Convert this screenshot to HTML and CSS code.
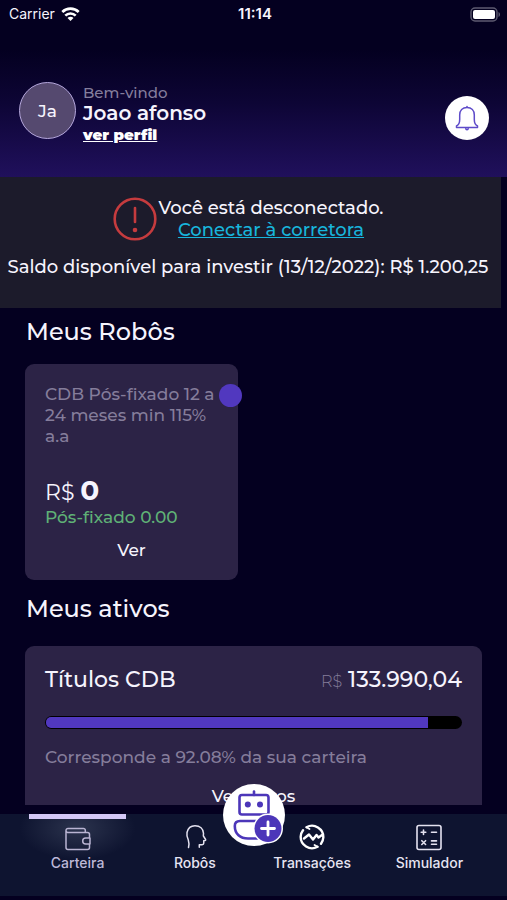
FILE: index.html
```html
<!DOCTYPE html>
<html lang="pt-BR">
<head>
<meta charset="utf-8">
<meta name="viewport" content="width=device-width, initial-scale=1">
<title>Carteira</title>
<link rel="stylesheet" href="styles.css">
</head>
<body>
<div class="app">
  <header class="hero">
    <div class="status">
      <span class="carrier">Carrier
        <svg width="19" height="14" viewBox="0 0 19 14" fill="none" stroke="#fff" stroke-width="2.6" aria-hidden="true"><path d="M1.300 5a11.600 11.600 0 0 1 16.400 0M4.300 8.600a7.400 7.400 0 0 1 10.400 0"/><path d="M9.500 14 6.500 11a4.200 4.200 0 0 1 6 0z" fill="#fff" stroke="none"/></svg>
      </span>
      <span class="clock">11:14</span>
      <svg class="battery" width="31" height="15" viewBox="0 0 31 15" aria-hidden="true"><rect x="1" y="1" width="26" height="13" rx="4" fill="none" stroke="#5d5a70" stroke-width="1.400"/><rect x="3" y="3" width="22" height="9" rx="2" fill="#fff"/><path d="M28.500 5v5c2-.8 2-4.200 0-5z" fill="#5d5a70"/></svg>
    </div>
    <div class="profile">
      <div class="avatar">Ja</div>
      <div class="who">
        <span class="welcome">Bem-vindo</span>
        <span class="name">Joao afonso</span>
        <a class="see" href="#perfil">ver perfil</a>
      </div>
      <button class="bell" type="button" aria-label="Notificações">
        <svg width="26" height="28" viewBox="0 0 26 28" fill="none" stroke="#5e4bc9" stroke-width="1.500" stroke-linecap="round" stroke-linejoin="round" aria-hidden="true"><path d="M13 3.500C8.500 3.500 5.700 6.500 5.700 11v4.500C5.700 19 4.500 21 2.500 22v1.500h21V22c-2-1-3.200-3-3.200-6.500V11c0-4.500-2.800-7.500-7.300-7.500z"/><path d="M13 3.300V2.500M11.800 24.500c0 1.600 2.400 1.600 2.400 0"/></svg>
      </button>
    </div>
  </header>

  <main class="content">
    <section class="notice">
      <div class="notice-top">
        <svg width="44" height="44" viewBox="0 0 44 44" fill="none" stroke="#c53b3e" stroke-width="2.600" stroke-linecap="round" aria-hidden="true"><circle cx="22" cy="22" r="20.300"/><path d="M22 11v14"/><circle cx="22" cy="33" r="2.300" fill="#c53b3e" stroke="none"/></svg>
        <p class="notice-text">Você está desconectado.<br><a href="#conectar">Conectar à corretora</a></p>
      </div>
      <p class="balance">Saldo disponível para investir (13/12/2022): R$ 1.200,25</p>
    </section>

    <h2>Meus Robôs</h2>
    <article class="card robot">
      <span class="dot"></span>
      <p class="robot-name">CDB Pós-fixado 12 a 24 meses min 115% a.a</p>
      <p class="amount">R$ <strong>0</strong></p>
      <p class="yield">Pós-fixado 0.00</p>
      <button class="link" type="button">Ver</button>
    </article>

    <h2>Meus ativos</h2>
    <article class="card asset">
      <div class="asset-head">
        <h3>Títulos CDB</h3>
        <p class="total"><span>R$</span> 133.990,04</p>
      </div>
      <div class="bar"><div class="fill" style="width:92.08%"></div></div>
      <p class="share">Corresponde a 92.08% da sua carteira</p>
      <button class="link" type="button">Ver ativos</button>
    </article>
  </main>

  <nav class="tabs">
    <a class="tab active" href="#carteira">
      <svg width="28" height="28" viewBox="0 0 28 28" fill="none" stroke="#b9b4d2" stroke-width="1.500" stroke-linejoin="round" aria-hidden="true"><path d="M25.500 13V9.500a2 2 0 0 0-2-2H3.500A2 2 0 0 1 2 5.500V22.500a2 2 0 0 0 2 2h19.500a2 2 0 0 0 2-2V19M2 5.500a2 2 0 0 1 2-2h15.500a1.800 1.800 0 0 1 1.800 1.800v2.200M26 13h-4.300a3 3 0 0 0 0 6H26z"/></svg>
      Carteira
    </a>
    <a class="tab" href="#robos">
      <svg width="28" height="28" viewBox="0 0 28 28" fill="none" stroke="#e4e2f0" stroke-width="1.500" stroke-linecap="round" stroke-linejoin="round" aria-hidden="true"><path d="M7.500 24.500c.8-3 .6-5-.2-7.500C6 14 5.500 12 6 9.500 7 5 10 2.800 14 2.800c5 0 8.200 3 8.500 7.500 0 1.300-.3 2-.1 2.700l2.200 3.500c.2.500 0 .9-.6 1l-1.300.3.100 2.200c0 1.200-.6 1.700-1.700 1.700h-2.800v2.500"/></svg>
      Robôs
    </a>
    <a class="tab" href="#transacoes">
      <svg width="28" height="28" viewBox="0 0 28 28" fill="none" stroke="#fff" stroke-width="2.400" stroke-linecap="round" stroke-linejoin="round" aria-hidden="true"><path d="M8.500 4.200A11.300 11.300 0 0 1 25.300 14.500M19.500 23.800A11.300 11.300 0 0 1 2.700 13.500M2.700 13.500A11.300 11.300 0 0 1 5 7.200M25.300 14.500A11.300 11.300 0 0 1 23 20.800"/><path d="M8.500 4.200l3 1.800M19.500 23.800l-3-1.800" stroke-width="1.800"/><path d="M6 15.500l5-4 4 5 3.500-4.500 2 2.500 3.500-2.500"/></svg>
      Transações
    </a>
    <a class="tab" href="#simulador">
      <svg width="28" height="28" viewBox="0 0 28 28" fill="none" stroke="#e4e2f0" stroke-width="1.600" stroke-linecap="round" aria-hidden="true"><rect x="2" y="2.500" width="24" height="24" rx="2"/><path d="M8.500 7v4.500M6.200 9.300h4.600M16.500 9.300h5M6.800 17.700l3.800 3.800M10.600 17.700 6.800 21.500M16.500 17.900h5M16.500 21.300h5"/></svg>
      Simulador
    </a>
    <button class="fab" type="button" aria-label="Novo robô">
      <svg width="62" height="62" viewBox="0 0 62 62" fill="none" stroke="#4c36b9" stroke-width="2.600" stroke-linecap="round" stroke-linejoin="round" aria-hidden="true"><rect x="16.500" y="11" width="29" height="19.500" rx="2.500"/><path d="M31 11V7.500"/><g fill="#4c36b9" stroke="none"><circle cx="24.800" cy="20.500" r="3"/><circle cx="37" cy="20.500" r="3"/></g><path d="M38 37H17c-3.500 0-5.200 2-5.200 5 0 8 5.500 12.500 13.200 12.500h9"/><circle cx="45" cy="44.500" r="15" fill="#fff" stroke="none"/><circle cx="45" cy="44.500" r="13.500" fill="#4c36b9" stroke="none"/><path d="M45 38v13M38.500 44.500h13" stroke="#fff" stroke-width="2.800"/></svg>
    </button>
  </nav>
</div>
</body>
</html>
```
FILE: styles.css
```css
* { box-sizing: border-box; }
body {
  margin: 0;
  background: #040020;
  color: #f6f4fd;
  font-family: Montserrat, Inter, sans-serif;
  font-weight: 500;
}
p, h2, h3 { margin: 0; font-weight: 500; }
svg { display: block; flex: none; }
button { font: inherit; color: inherit; border: 0; padding: 0; background: none; cursor: pointer; }

.app { height: 100vh; display: flex; flex-direction: column; padding-bottom: 4px; }

.hero { flex: none; height: 177px; background: linear-gradient(#040020 28%, #0d0535 58%, #20105c); }
.status {
  display: grid;
  grid-template-columns: 1fr auto 1fr;
  align-items: center;
  height: 28px;
  padding: 0 6px 0 9px;
  font: 400 14px/28px Inter, sans-serif;
}
.carrier { display: flex; align-items: center; gap: 6px; }
.clock { font-size: 15px; font-weight: 600; }
.battery { justify-self: end; }

.profile { display: flex; align-items: flex-start; padding: 54px 18px 0 19px; }
.avatar {
  width: 57px;
  height: 57px;
  display: grid;
  place-items: center;
  border: 1px solid #b5a7dc;
  border-radius: 50%;
  background: #55496f;
  font-size: 17px;
}
.who { display: flex; flex-direction: column; flex: 1; margin-left: 7px; line-height: 21px; }
.welcome { font-size: 15px; color: #857e9d; }
.name { font-size: 20px; font-weight: 600; }
.see { font-size: 15px; font-weight: 900; color: #fff; }
.bell {
  width: 44px;
  height: 44px;
  margin-top: 14px;
  display: grid;
  place-items: center;
  border-radius: 50%;
  background: #fff;
}

.content { flex: 1; min-height: 0; overflow: hidden; margin-bottom: 9px; }
.notice {
  margin-right: 6px;
  padding: 20px 5px 30px 0;
  background: #1c1b2b;
  font-size: 18px;
  line-height: 22px;
  text-align: center;
}
.notice-top { display: flex; justify-content: center; gap: 2px; margin-bottom: 15px; }
.notice-text a { color: #18b5dc; }
.balance { white-space: nowrap; }

h2 { margin: 0 26px; padding-top: 8px; font-size: 24px; line-height: 32px; }
.card { position: relative; margin: 16px 25px 0; padding: 20px; border-radius: 9px; background: #2c2346; }
.robot { width: 213px; height: 216px; margin-bottom: 5px; }
.dot { position: absolute; top: 20px; right: -4px; width: 23px; height: 23px; border-radius: 50%; background: #5138bf; }
.robot-name, .yield, .share { font-size: 17px; line-height: 21px; }
.robot-name, .share { color: #857d9b; }
.robot-name { margin-right: -4px; }
.amount { margin-top: 29px; font-size: 22px; line-height: 29px; font-weight: 400; }
.amount strong { font-size: 28px; font-weight: 700; }
.yield { color: #5fb176; }
.link { display: block; width: 100%; margin-top: 11px; font-size: 17px; line-height: 22px; }

.asset { margin-top: 21px; }
.asset-head { display: flex; justify-content: space-between; align-items: baseline; line-height: 28px; }
h3, .total { font-size: 22px; }
.total span { font-size: 16px; font-weight: 300; color: #857d9b; }
.bar { height: 13px; margin-top: 20px; padding: 1px; border-radius: 7px; background: #000; overflow: hidden; }
.fill { height: 11px; border-radius: 5px 0 0 5px; background: #5138bf; }
.share { margin-top: 18px; }
.asset .link { margin-top: 17px; }

.tabs {
  position: relative;
  flex: none;
  height: 82px;
  display: grid;
  grid-template-columns: repeat(4, 1fr);
  padding: 0 19px;
  background: #0e1430;
}
.tab {
  position: relative;
  display: flex;
  flex-direction: column;
  align-items: center;
  gap: 2px;
  padding-top: 9px;
  font: 500 14px/20px Inter, sans-serif;
  color: #e6e4f2;
  text-decoration: none;
}
.active { color: #bdb8d8; background: radial-gradient(ellipse 58px 32px at 50% 14px, #2b334d, #0e1430); }
.active::before { content: ""; position: absolute; top: 0; left: 10px; right: 10px; height: 5px; background: #d3c7f6; }
.active svg { margin-top: 2px; margin-bottom: -2px; }
.fab {
  position: absolute;
  top: -30px;
  left: calc(50% - 31px);
  width: 62px;
  height: 62px;
  border-radius: 50%;
  background: #fff;
}
```
